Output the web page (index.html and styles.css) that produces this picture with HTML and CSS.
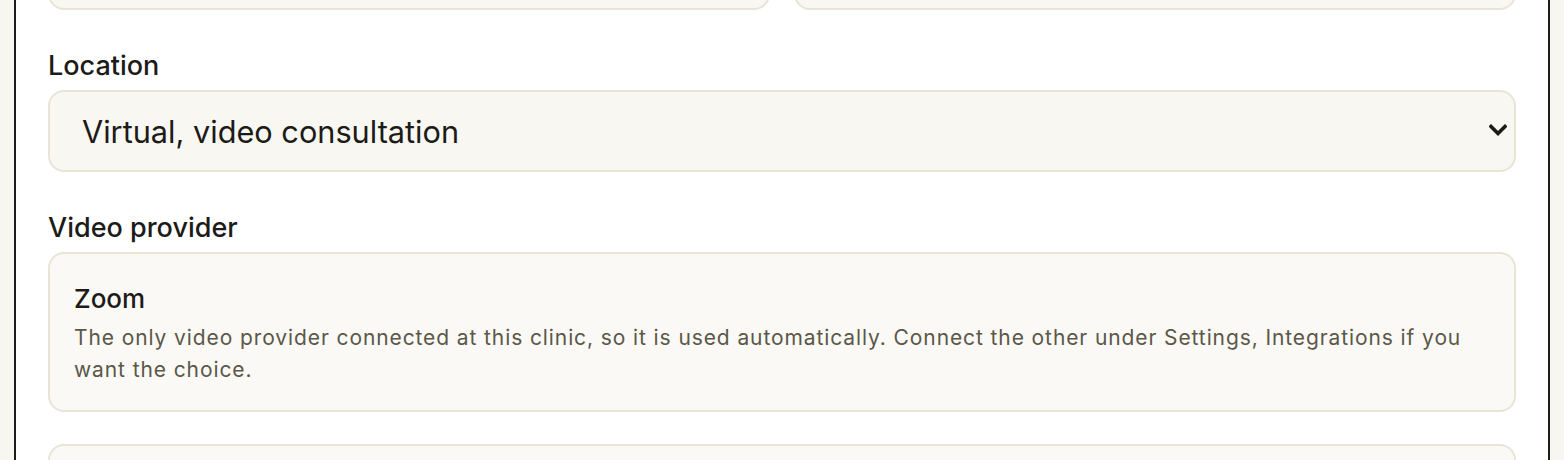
FILE: index.html
```html
<!DOCTYPE html>
<html lang="en">
<head>
<meta charset="utf-8">
<title>Appointment form</title>
<link rel="stylesheet" href="styles.css">
</head>
<body>
<main class="panel">
  <div class="row-two">
    <div class="input"></div>
    <div class="input"></div>
  </div>

  <div class="field">
    <label class="label" for="location">Location</label>
    <div class="select-wrap">
      <select id="location" class="select">
        <option>Virtual, video consultation</option>
        <option>In person</option>
      </select>
      <svg class="chevron" width="18" height="13" viewBox="0 0 18 13" aria-hidden="true">
        <path d="M2 2.5 L9 9.5 L16 2.5" fill="none" stroke="#1b1a17" stroke-width="3.6" stroke-linecap="square" stroke-linejoin="miter"/>
      </svg>
    </div>
  </div>

  <div class="field field-provider">
    <div class="label">Video provider</div>
    <div class="card">
      <div class="card-title">Zoom</div>
      <p class="card-text">The only video provider connected at this clinic, so it is used automatically. Connect the other under Settings, Integrations if you want the choice.</p>
    </div>
  </div>

  <div class="card card-next"></div>
</main>
</body>
</html>
```

FILE: styles.css
```css
html, body {
  margin: 0;
  padding: 0;
}
body {
  background: #f7f6f1;
  font-family: "Inter", "Noto Sans", sans-serif;
  color: #1c1b18;
  overflow: hidden;
  height: 460px;
}
.panel {
  margin: -72px 0 0 14px;
  width: 1536px;
  min-height: 600px;
  background: #ffffff;
  border-left: 2px solid #1d1c1a;
  border-right: 2px solid #1d1c1a;
  padding: 0 32px;
  box-sizing: border-box;
}
.row-two {
  display: grid;
  grid-template-columns: 1fr 1fr;
  gap: 24px;
}
.input {
  height: 82px;
  background: #f8f7f2;
  border: 2px solid #e8e4d7;
  border-radius: 16px;
  box-sizing: border-box;
}
.field {
  margin-top: 40px;
}
.field-provider {
  margin-top: 40px;
}
.label {
  display: block;
  font-size: 27px;
  line-height: 32px;
  font-weight: 500;
  color: #1c1b18;
  margin-bottom: 8px;
}
.select-wrap {
  position: relative;
}
.select {
  display: block;
  width: 100%;
  height: 82px;
  appearance: none;
  -webkit-appearance: none;
  background: #f8f7f2;
  border: 2px solid #e8e4d7;
  border-radius: 16px;
  padding: 0 32px;
  font-family: inherit;
  font-size: 30.7px;
  color: #1c1b18;
  box-sizing: border-box;
}
.chevron {
  position: absolute;
  right: 9px;
  top: 34px;
}
.card {
  background: #faf9f5;
  border: 2px solid #e8e4d7;
  border-radius: 16px;
  padding: 29px 24px 24px;
  box-sizing: border-box;
}
.card-title {
  font-size: 26px;
  line-height: 32px;
  font-weight: 500;
  color: #1c1b18;
}
.card-text {
  margin: 7px 0 0;
  font-size: 21px;
  line-height: 32px;
  letter-spacing: 0.9px;
  color: #5b5749;
}
.card-next {
  margin-top: 32px;
  height: 80px;
}
```
